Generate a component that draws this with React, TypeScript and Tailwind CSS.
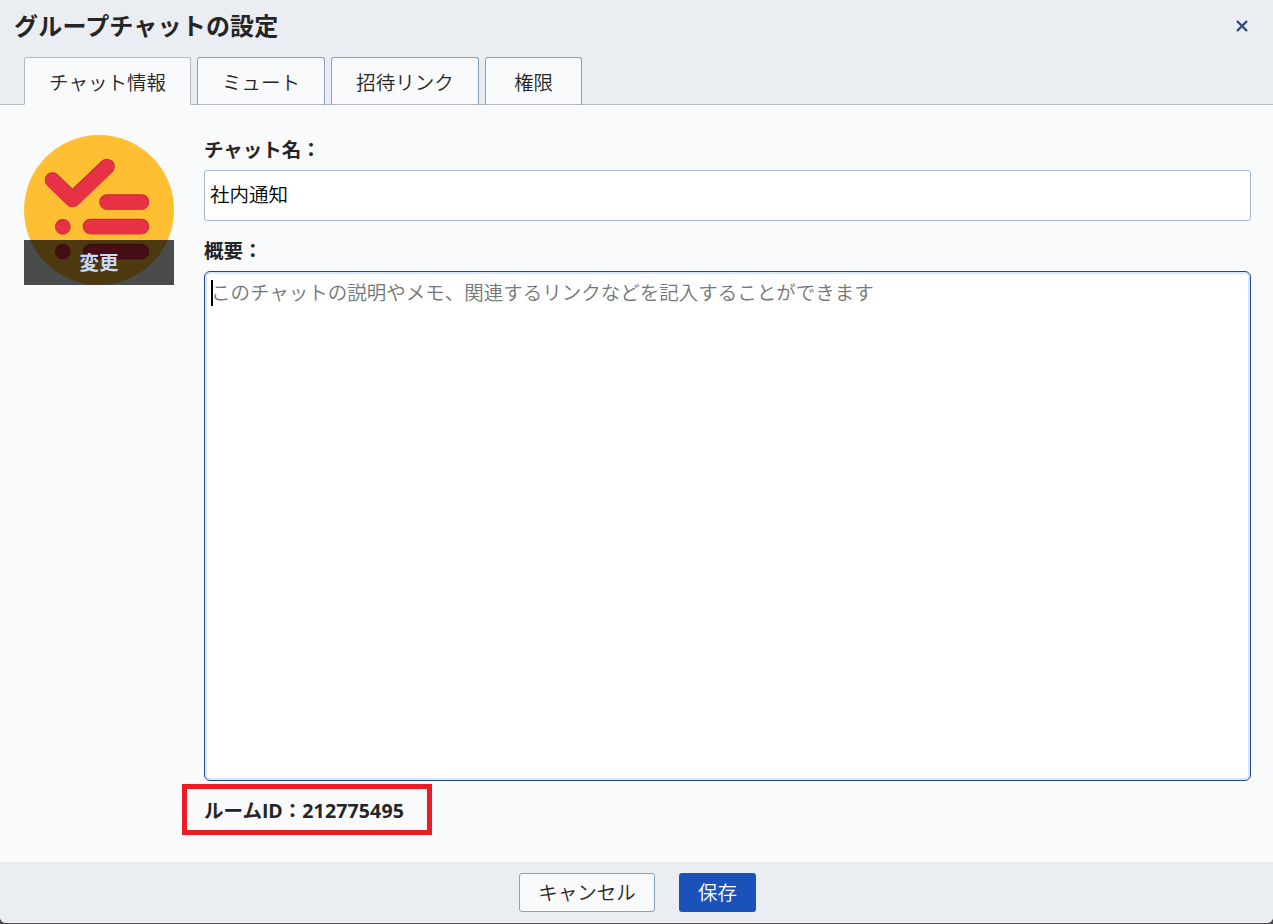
import { useState } from 'react'

const tabs = [
  { id: 'info', label: 'チャット情報', width: 'w-[167px]' },
  { id: 'mute', label: 'ミュート', width: 'w-32' },
  { id: 'invite', label: '招待リンク', width: 'w-37' },
  { id: 'permission', label: '権限', width: 'w-[97px]' }
]

const GroupIcon = () => (
  <svg viewBox="0 0 150 150" className="block size-[150px]">
    <circle cx="75" cy="75" r="75" fill="#ffbf32" />
    <g
      fill="none"
      stroke="#cb2a3a"
      strokeWidth="15.6"
      strokeLinecap="round"
      strokeLinejoin="round"
    >
      <path d="M28.5 45 48.5 64.5 83 31.5" />
      <path d="M83 67H117.5M66.5 91.5H117.5M66.5 116.5H117.5M38.8 91.7h.01M38.8 116.5h.01" />
    </g>
    <g
      fill="none"
      stroke="#e73144"
      strokeWidth="14.2"
      strokeLinecap="round"
      strokeLinejoin="round"
    >
      <path d="M28.5 45.7 48.5 65.2 83 32.2" />
      <path d="M83 67.7H117.5M66.5 92.2H117.5M66.5 117.2H117.5M38.8 92.4h.01M38.8 117.2h.01" />
    </g>
  </svg>
)

export default function App() {
  const [activeTab, setActiveTab] = useState('info')
  const [name, setName] = useState('社内通知')

  return (
    <div className="h-[924px] overflow-hidden bg-[#4a4a4e] pb-px font-['Open_Sans','Noto_Sans_CJK_JP',sans-serif] text-[19.5px] font-[350] text-[#252525]">
      <div className="flex h-full flex-col overflow-hidden rounded-b-md border-b border-[#fafbfd] bg-[#f9fafc]">
        {/* HEADER */}
        <header className="flex h-[105px] shrink-0 flex-col justify-between bg-[#eaedf2]">
          <div className="flex items-center justify-between pt-2 pr-[25px] pl-3.5">
            <h1 className="text-[24px] leading-9 font-bold tracking-[0.2px]">
              グループチャットの設定
            </h1>
            <button aria-label="閉じる">
              <svg viewBox="0 0 12 12" className="block size-3">
                <path
                  d="M1 1 11 11M11 1 1 11"
                  stroke="#2a4985"
                  strokeWidth="2.3"
                />
              </svg>
            </button>
          </div>

          {/* TABS */}
          <div className="flex">
            <div className="w-6 border-b border-[#b4b8bf]" />
            {tabs.map(({ id, label, width }) => (
              <div key={id} className="flex">
                <button
                  onClick={() => setActiveTab(id)}
                  className={`h-12 rounded-t-[3px] border bg-[#f9fafc] pt-1 leading-none ${width} ${
                    activeTab === id
                      ? 'border-[#b4b8bf] border-b-[#f9fafc]'
                      : 'border-[#89a0c0] border-b-[#b4b8bf]'
                  }`}
                >
                  {label}
                </button>
                <div className="w-1.5 border-b border-[#b4b8bf]" />
              </div>
            ))}
            <div className="flex-1 border-b border-[#b4b8bf]" />
          </div>
        </header>

        {/* FORM */}
        <main className="flex min-h-0 flex-1 pt-[30px] pr-[22px] pl-6">
          <div className="relative size-[150px] shrink-0">
            <GroupIcon />
            <button className="absolute inset-x-0 bottom-0 h-[45px] bg-black/70 leading-none font-bold text-[#c9d9f8]">
              変更
            </button>
          </div>

          <div className="ml-[30px] flex flex-1 flex-col">
            <label
              htmlFor="chat-name"
              className="h-[35px] leading-[30px] font-bold"
            >
              チャット名：
            </label>
            <input
              id="chat-name"
              value={name}
              onChange={(e) => setName(e.target.value)}
              className="h-[51px] rounded-[3px] border border-[#a8bad3] bg-white pr-[5px] pb-1 pl-[5px] text-black outline-none"
            />
            <label
              htmlFor="chat-description"
              className="mt-4 h-[34px] leading-7 font-bold"
            >
              概要：
            </label>
            <div className="flex h-[510px] items-start rounded-[6px] border border-[#244587] bg-white p-1.5 shadow-[inset_0_0_0_2px_#d9e6fc]">
              <span className="mt-0.5 h-[26px] w-0.5 shrink-0 bg-black" />
              <textarea
                id="chat-description"
                placeholder="このチャットの説明やメモ、関連するリンクなどを記入することができます"
                className="-ml-0.5 h-full flex-1 resize-none bg-transparent pt-px leading-7 outline-none placeholder:text-[#757575]"
              />
            </div>
            <div className="mt-[3px] -ml-[22px] flex h-[51px] w-[250px] items-center border-[5px] border-[#ed1c24] pt-0.5 pl-[17px] leading-none font-bold">
              ルームID：<span className="tracking-[0.15px]">212775495</span>
            </div>
          </div>
        </main>

        {/* FOOTER */}
        <footer className="flex h-15 shrink-0 items-start justify-center gap-6 bg-[#eaedf2] pt-[11px] pl-0.5">
          <button className="h-[39px] w-34 rounded-[3px] border border-[#89a0c0] bg-[#f9fafc] leading-none">
            キャンセル
          </button>
          <button className="h-[39px] w-[77px] rounded-[3px] bg-[#1b52b9] leading-none text-white">
            保存
          </button>
        </footer>
      </div>
    </div>
  )
}
